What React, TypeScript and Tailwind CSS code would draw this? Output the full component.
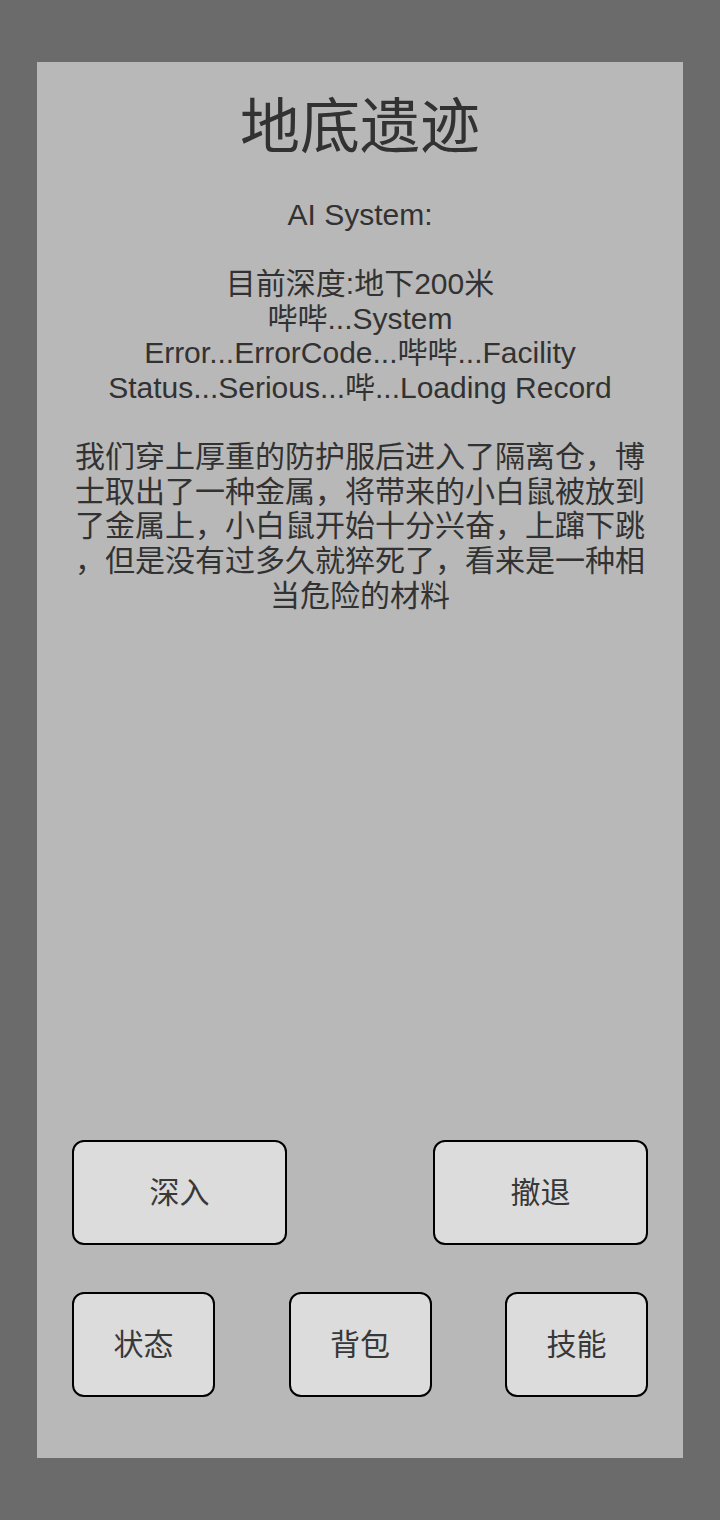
const FONT = { fontFamily: '"Liberation Sans", "Noto Sans CJK SC", sans-serif' };

// lines are split by hand to keep the same wrapping as the game screen
const LOG_LINES = [
  "AI System:",
  "",
  "目前深度:地下200米",
  "哔哔...System",
  "Error...ErrorCode...哔哔...Facility",
  "Status...Serious...哔...Loading Record",
  "",
  "我们穿上厚重的防护服后进入了隔离仓，博",
  "士取出了一种金属，将带来的小白鼠被放到",
  "了金属上，小白鼠开始十分兴奋，上蹿下跳",
  "，但是没有过多久就猝死了，看来是一种相",
  "当危险的材料",
];

function GameButton({ label, className }: { label: string; className: string }) {
  return (
    <button
      className={`h-[105px] rounded-[12px] border-2 border-black bg-[#dcdcdc] text-[30px] text-[#383838] flex items-center justify-center ${className}`}
    >
      {label}
    </button>
  );
}

export default function App() {
  return (
    <div className="w-[720px] h-[1520px] bg-[#6b6b6b] pt-[62px] pl-[37px]" style={FONT}>
      <div className="w-[646px] h-[1396px] bg-[#b8b8b8] flex flex-col px-[35px] pb-[61px]">
        <h1 className="mt-[36px] h-[60px] leading-[60px] text-[60px] text-center text-[#323232]">地底遗迹</h1>
        <div className="mt-[40px] text-[30px] leading-[34.6px] text-center text-[#323232]">
          {LOG_LINES.map((line, i) => (
            <div key={i} className="whitespace-nowrap h-[34.6px]">
              {line}
            </div>
          ))}
        </div>
        <div className="mt-auto flex flex-col gap-[47px]">
          <div className="flex justify-between">
            <GameButton label="深入" className="w-[215px]" />
            <GameButton label="撤退" className="w-[215px]" />
          </div>
          <div className="flex justify-between">
            <GameButton label="状态" className="w-[143px]" />
            <GameButton label="背包" className="w-[143px]" />
            <GameButton label="技能" className="w-[143px]" />
          </div>
        </div>
      </div>
    </div>
  );
}
